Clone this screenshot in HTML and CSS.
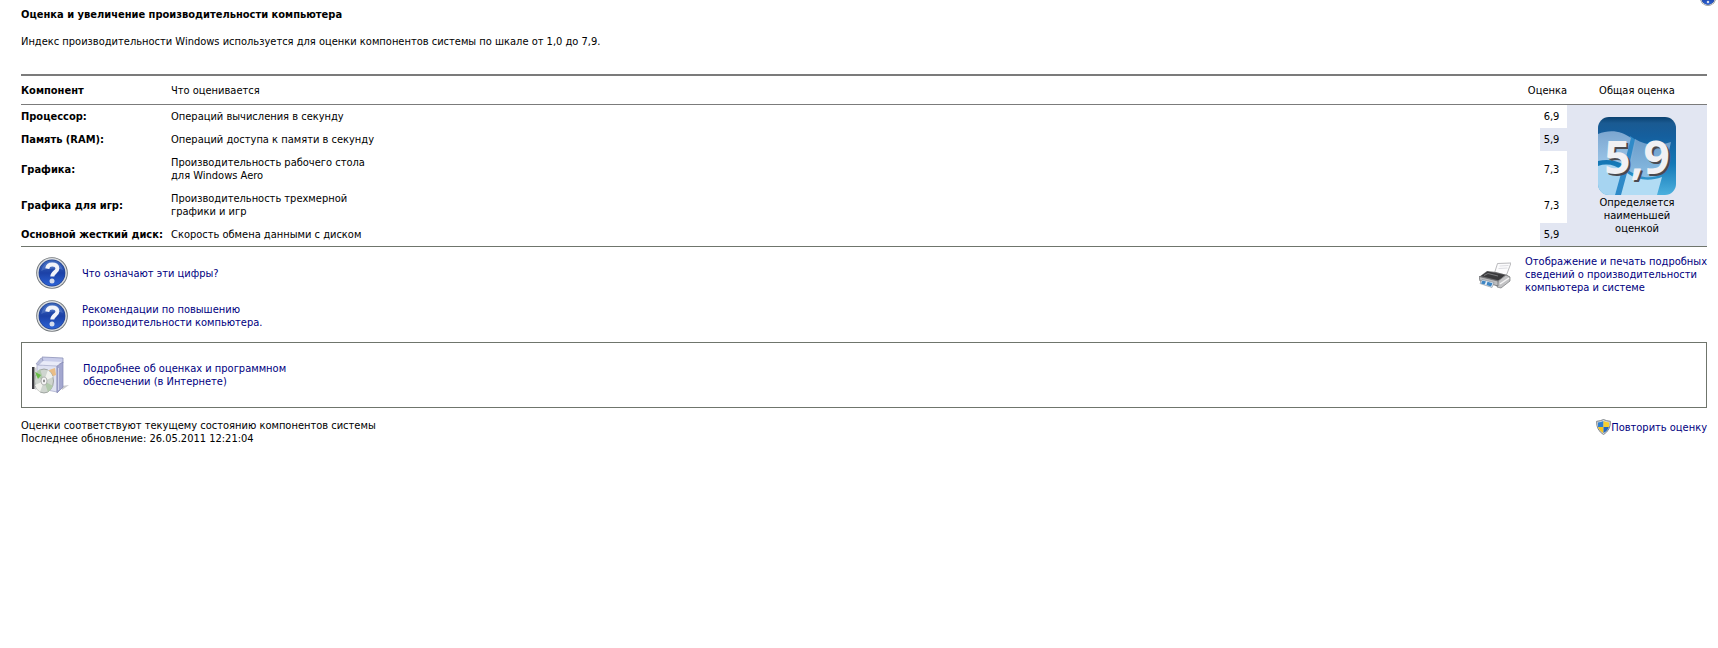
FILE: index.html
```
<!DOCTYPE html>
<html lang="ru">
<head>
    <meta charset="UTF-8">
    <meta name="viewport" content="width=device-width, initial-scale=1.0">
    <title>Счетчики и средства производительности</title>
    <link rel="stylesheet" href="styles.css">
</head>
<body>

    <!-- shared icon shapes -->
    <svg class="defs" aria-hidden="true">
        <defs>
            <linearGradient id="helpBlue" x1="0" y1="0" x2="0" y2="1">
                <stop offset="0" stop-color="#3d69bd"/>
                <stop offset="0.5" stop-color="#1c41a6"/>
                <stop offset="1" stop-color="#2c63d6"/>
            </linearGradient>
            <symbol id="help" viewBox="0 0 32 32">
                <circle cx="16" cy="16" r="15.8" fill="#6f7478"/>
                <circle cx="16" cy="16" r="14.9" fill="#dcdfe1"/>
                <circle cx="16" cy="16" r="13.4" fill="#23408c"/>
                <circle cx="16" cy="16" r="12.8" fill="url(#helpBlue)"/>
                <path d="M5 14a11.3 11.3 0 0 1 22-1c-6-2-15-2-22 1z" fill="#7f9fdc" opacity="0.35"/>
                <path d="M11.2 11.6c.4-2.800 2.400-4.200 5-4.200 3 0 5.200 1.500 5.200 4 0 3.800-5.100 3.700-5.100 8.200" fill="none" stroke="#f2f4fa" stroke-width="4"/>
                <circle cx="16" cy="24" r="2.500" fill="#d5dcec"/>
            </symbol>
        </defs>
    </svg>

    <a class="help-corner" href="#" aria-label="Справка"><svg width="16" height="16"><use href="#help"/></svg></a>

    <main class="page">
        <h1>Оценка и увеличение производительности компьютера</h1>
        <p class="intro">Индекс производительности Windows используется для оценки компонентов системы по шкале от 1,0 до 7,9.</p>

        <table class="scores">
            <colgroup>
                <col class="col-name">
                <col>
                <col class="col-gap">
                <col class="col-score">
                <col class="col-base">
            </colgroup>
            <thead>
                <tr>
                    <th class="name" scope="col">Компонент</th>
                    <th scope="col">Что оценивается</th>
                    <th class="score-head" scope="col" colspan="2">Оценка</th>
                    <th class="base-head" scope="col">Общая оценка</th>
                </tr>
            </thead>
            <tbody>
                <tr>
                    <th class="name" scope="row">Процессор:</th>
                    <td colspan="2">Операций вычисления в секунду</td>
                    <td class="score">6,9</td>
                    <td class="base" rowspan="5">
                        <svg class="badge" width="78" height="78" viewBox="0 0 78 78">
                            <defs>
                                <linearGradient id="tile" x1="0" y1="0" x2="0" y2="1">
                                    <stop offset="0" stop-color="#0b4270"/>
                                    <stop offset="0.080" stop-color="#1a5a92"/>
                                    <stop offset="0.250" stop-color="#155f9e"/>
                                    <stop offset="0.600" stop-color="#1478b6"/>
                                    <stop offset="1" stop-color="#4cb0de"/>
                                </linearGradient>
                                <linearGradient id="pane" x1="0" y1="0" x2="0" y2="1">
                                    <stop offset="0" stop-color="#7ca6d0"/>
                                    <stop offset="1" stop-color="#9cc6e8"/>
                                </linearGradient>
                                <clipPath id="tileClip"><rect width="78" height="78" rx="11"/></clipPath>
                            </defs>
                            <g clip-path="url(#tileClip)">
                                <rect width="78" height="78" fill="url(#tile)"/>
                                <path d="M24 50L17 78h7l8-26 6-29-6-4z" fill="#2f8ac8"/>
                                <path d="M0 17c12-5 24-3 33 4L26 48C18 43 9 42 0 44z" fill="url(#pane)"/>
                                <path d="M37 22c10 6 21 8 36 3L66 56c-12 7-25 5-36-3z" fill="url(#pane)" opacity="0.850"/>
                                <path d="M0 49c9-3 17-1 24 4L17 78H0z" fill="#a6d4f1"/>
                                <path d="M29 56c10 7 22 9 35 4L59 78H23z" fill="#b2dcf4"/>
                            </g>
                            <text class="badge-shadow" x="41" y="59">5,9</text>
                            <text class="badge-text" x="39" y="57">5,9</text>
                        </svg>
                        <div>Определяется<br>наименьшей<br>оценкой</div>
                    </td>
                </tr>
                <tr>
                    <th class="name" scope="row">Память (RAM):</th>
                    <td colspan="2">Операций доступа к памяти в секунду</td>
                    <td class="score lowest">5,9</td>
                </tr>
                <tr>
                    <th class="name" scope="row">Графика:</th>
                    <td colspan="2">Производительность рабочего стола<br>для Windows Aero</td>
                    <td class="score">7,3</td>
                </tr>
                <tr>
                    <th class="name" scope="row">Графика для игр:</th>
                    <td colspan="2">Производительность трехмерной<br>графики и игр</td>
                    <td class="score">7,3</td>
                </tr>
                <tr>
                    <th class="name" scope="row">Основной жесткий диск:</th>
                    <td colspan="2">Скорость обмена данными с диском</td>
                    <td class="score lowest">5,9</td>
                </tr>
            </tbody>
        </table>

        <div class="links">
            <div class="help-links">
                <div class="link-row">
                    <svg width="32" height="32"><use href="#help"/></svg>
                    <a href="#">Что означают эти цифры?</a>
                </div>
                <div class="link-row">
                    <svg width="32" height="32"><use href="#help"/></svg>
                    <a href="#">Рекомендации по повышению<br>производительности компьютера.</a>
                </div>
            </div>
            <div class="link-row print">
                <svg width="32" height="32" viewBox="0 0 32 32">
                    <path d="M18.500 4.500L32 4l-4.500 12-12-2z" fill="#fcfcfd" stroke="#a8a8ac" stroke-width="0.800"/>
                    <path d="M20.500 7l9-.5M19.500 9.500l9-.5" stroke="#d4d4da" stroke-width="0.800"/>
                    <path d="M0 18l8-6 9 1 11 3 3 2-9 8-4 1z" fill="#6d6d6f"/>
                    <path d="M2 17L8.500 12.500 26 16l-6 5.500z" fill="#3a3a3c"/>
                    <path d="M5 16.500l4-2 10 2.500" fill="none" stroke="#8a8b8e" stroke-width="0.800"/>
                    <path d="M19 22l8-6 4 2v4l-9 7-4-1z" fill="#c2c2c4" stroke="#77787a" stroke-width="0.700"/>
                    <path d="M21 25l9-6" stroke="#f5f5f5" stroke-width="1.500"/>
                    <path d="M0 17.500l19 4.500v5L1 22z" fill="#bcbdbf" stroke="#66676b" stroke-width="0.700"/>
                    <path d="M3 20.500l12 3-2 5-12-4z" fill="#e2edf6" stroke="#7f8790" stroke-width="0.600"/>
                    <path d="M3.500 21.500l3.500 1-1.500 3-3.500-1zM8.500 22.800l5 1.400-1.500 3.200-4.500-1.400z" fill="#3d85c4"/>
                </svg>
                <a href="#">Отображение и печать подробных<br>сведений о производительности<br>компьютера и системе</a>
            </div>
        </div>

        <div class="online">
            <svg width="40" height="40" viewBox="0 0 40 40">
                <path d="M30 31l8-1-7 5z" fill="#b4b4b8" opacity="0.700"/>
                <path d="M5 9l5-6 3 3-3 5z" fill="#b9bedb" stroke="#9196bb" stroke-width="0.600"/>
                <path d="M11 2l21 1v5l-19 2z" fill="#c9cdea" stroke="#8d92b8" stroke-width="0.800"/>
                <path d="M12 6l19 1-6 4-17-1z" fill="#e9ebf8"/>
                <path d="M6 10l20 1v26L6 33z" fill="#dfe2f2" stroke="#a4a8c8" stroke-width="0.700"/>
                <path d="M26 11l6-4v25l-6 6z" fill="#a3a7cf" stroke="#8287b2" stroke-width="0.700"/>
                <path d="M27.500 13v22" stroke="#cfd2ec"/>
                <path d="M18 15l6-2 1 7-5 2z" fill="#e9bd86"/>
                <rect x="1" y="12" width="2.500" height="22" fill="#3c3c40"/>
                <path d="M4 13l2-1v22l-2 1z" fill="#d4d6d8"/>
                <ellipse cx="13" cy="26" rx="9.500" ry="12" fill="#cfd5cf" stroke="#8f9490" stroke-width="0.800"/>
                <path d="M13 26L4 20q2-4 5-6zM13 26l9 5q-2 4-5 6z" fill="#b1c9ab"/>
                <path d="M13 26l4-11q4 3 5 7zM13 26l-4 11q-4-3-5-7z" fill="#f1f2ed"/>
                <path d="M4 17l6 3-3 4z" fill="#66bb45"/>
                <ellipse cx="13" cy="26" rx="3" ry="4" fill="#f6f6f6" stroke="#9a9a9a" stroke-width="0.700"/>
                <ellipse cx="13" cy="26" rx="1" ry="1.400" fill="#888"/>
            </svg>
            <a href="#">Подробнее об оценках и программном<br>обеспечении (в Интернете)</a>
        </div>

        <div class="footer">
            <p>Оценки соответствуют текущему состоянию компонентов системы<br>Последнее обновление: 26.05.2011 12:21:04</p>
            <a class="rerun" href="#">
                <svg width="15" height="16" viewBox="0 0 15 16">
                    <path d="M7.500 0.500Q10.500 2 14.400 2.300Q14.800 11 7.500 15.600Q0.200 11 0.600 2.300Q4.500 2 7.500 0.500z" fill="#d3d8dc" stroke="#747a80" stroke-width="0.900"/>
                    <path d="M7.500 2Q5 3.400 2 3.600V8h5.500z" fill="#2f7fd0"/>
                    <path d="M7.500 2Q10 3.400 13 3.600V8H7.500z" fill="#f7cf2c"/>
                    <path d="M2.200 8h5.300v6Q3 11.400 2.200 8z" fill="#f2c21c"/>
                    <path d="M12.800 8H7.500v6Q12 11.400 12.800 8z" fill="#2467bd"/>
                </svg>Повторить оценку</a>
        </div>
    </main>

</body>
</html>
```
FILE: styles.css
```
body {
    margin: 0;
    background: #fff;
    color: #000;
    font-family: Tahoma, "DejaVu Sans Condensed", "DejaVu Sans", sans-serif;
    font-size: 11px;
    line-height: 13px;
}
h1, p {
    margin: 0;
    font-size: 11px;
}
svg {
    display: block;
    flex: none;
}
a {
    color: #000080;
    text-decoration: none;
}
a:hover {
    text-decoration: underline;
}
.defs {
    position: absolute;
    width: 0;
    height: 0;
}
.help-corner {
    position: absolute;
    top: -10px;
    right: 2px;
}
.page {
    padding: 8px 11px 0 21px;
}
.intro {
    margin: 14px 0 26px;
}

/* scores table */
.scores {
    width: 100%;
    border-collapse: separate;
    border-spacing: 0;
    border-top: 2px solid #7b7b7b;
    border-bottom: 1px solid #6f756c;
    table-layout: fixed;
}
.col-name {
    width: 150px;
}
.col-gap {
    width: 20px;
}
.col-score {
    width: 27px;
}
.col-base {
    width: 140px;
}
.scores th, .scores td {
    padding: 5px 0;
    font-weight: normal;
    text-align: left;
    white-space: nowrap;
}
.scores thead th {
    padding: 8px 0 7px;
    border-bottom: 1px solid #7b7b7b;
}
.scores .name {
    font-weight: bold;
}
.scores .score-head {
    text-align: right;
}
.scores .base-head, .scores .score, .scores .base {
    text-align: center;
}
.scores .score {
    padding-right: 4px;
}
.scores .lowest, .scores .base {
    background: #e2e6f2;
}
.badge {
    margin: 0 auto 1px;
}
.badge-text, .badge-shadow {
    font-family: "Noto Sans", sans-serif;
    font-size: 46px;
    font-weight: bold;
    text-anchor: middle;
    fill: #f0f0f4;
}
.badge-shadow {
    fill: #4a4a50;
}

/* links under the table */
.links {
    display: flex;
    justify-content: space-between;
    align-items: flex-start;
    padding: 10px 0 10px 15px;
}
.help-links {
    display: grid;
    gap: 11px;
}
.link-row {
    display: flex;
    align-items: center;
    gap: 14px;
}
.print {
    margin-top: -2px;
}
.online {
    display: flex;
    align-items: center;
    gap: 12px;
    padding: 12px 9px;
    border: 1px solid #6f756c;
}
.footer {
    display: flex;
    justify-content: space-between;
    align-items: flex-start;
    padding-top: 11px;
}
.rerun {
    display: flex;
    align-items: center;
}
```
